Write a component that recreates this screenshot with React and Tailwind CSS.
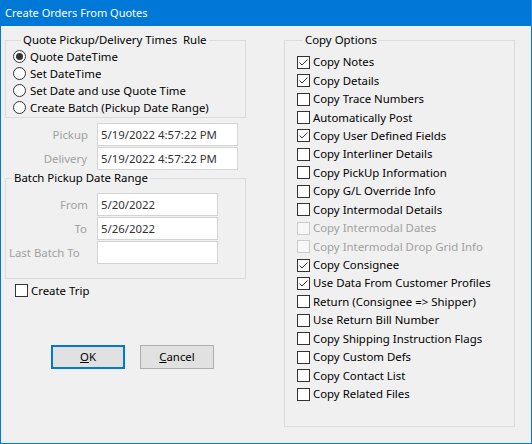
import React from "react";

const FONT = { fontFamily: '"Segoe UI", "Noto Sans", sans-serif' };

function Radio({ checked, label }) {
  return (
    <div className="flex items-center h-[17px]">
      <span className="w-[13px] h-[13px] rounded-full border border-[#333333] bg-white flex items-center justify-center shrink-0">
        {checked && <span className="w-[7px] h-[7px] rounded-full bg-[#333333]" />}
      </span>
      <span className="ml-[4px] text-[#000000] whitespace-nowrap">{label}</span>
    </div>
  );
}

function Check({ checked, disabled, label, h = "h-[18.45px]" }) {
  return (
    <div className={`flex items-center ${h}`}>
      <span
        className={`w-[13px] h-[13px] border shrink-0 flex items-center justify-center ${
          disabled ? "border-[#cccccc] bg-[#f7f7f7]" : "border-[#333333] bg-white"
        }`}
      >
        {checked && (
          <svg width="11" height="11" viewBox="0 0 11 11">
            <polyline points="1.5,5.5 4,8 9.5,2.5" fill="none" stroke="#333333" strokeWidth="1" />
          </svg>
        )}
      </span>
      <span className={`ml-[3px] whitespace-nowrap ${disabled ? "text-[#a0a0a0]" : "text-black"}`}>{label}</span>
    </div>
  );
}

function Field({ value, w }) {
  return (
    <div className={`${w} h-[23px] bg-white border border-[#d4d4d4] pl-[3px] flex items-center text-[#333333] whitespace-nowrap`}>
      {value}
    </div>
  );
}

export default function App() {
  const options = [
    ["Copy Notes", true],
    ["Copy Details", true],
    ["Copy Trace Numbers", false],
    ["Automatically Post", false],
    ["Copy User Defined Fields", true],
    ["Copy Interliner Details", false],
    ["Copy PickUp Information", false],
    ["Copy G/L Override Info", false],
    ["Copy Intermodal Details", false],
    ["Copy Intermodal Dates", false, true],
    ["Copy Intermodal Drop Grid Info", false, true],
    ["Copy Consignee", true],
    ["Use Data From Customer Profiles", true],
    ["Return (Consignee => Shipper)", false],
    ["Use Return Bill Number", false],
    ["Copy Shipping Instruction Flags", false],
    ["Copy Custom Defs", false],
    ["Copy Contact List", false],
    ["Copy Related Files", false],
  ];

  return (
    <div className="w-[532px] h-[444px] bg-[#f0f0f0] text-[11.4px] leading-[16px] overflow-hidden flex flex-col" style={FONT}>
      <div className="h-[26px] bg-[#0078d7] text-white text-[11px] pl-[5px] flex items-center shrink-0 border-r border-[#2b88d8]">
        Create Orders From Quotes
      </div>
      <div className="flex-1 flex border-l border-r border-b border-[#0078d7]">
        {/* Left column */}
        <div className="ml-[4px] w-[241px] flex flex-col">
          <fieldset className="mt-[6px] border border-[#dcdcdc] pl-[7px] pb-[1px]">
            <legend className="ml-[8px] px-[2px] leading-[16px]">Quote Pickup/Delivery Times&nbsp; Rule</legend>
            <Radio checked label="Quote DateTime" />
            <Radio label="Set DateTime" />
            <Radio label="Set Date and use Quote Time" />
            <Radio label="Create Batch (Pickup Date Range)" />
          </fieldset>

          <div className="mt-[5px] flex flex-col gap-[1px]">
            <div className="flex items-center">
              <div className="w-[83px] text-right text-[#a0a0a0]">Pickup</div>
              <div className="ml-[9px]">
                <Field w="w-[141px]" value="5/19/2022 4:57:22 PM" />
              </div>
            </div>
            <div className="flex items-center">
              <div className="w-[82px] text-right text-[#a0a0a0]">Delivery</div>
              <div className="ml-[10px]">
                <Field w="w-[141px]" value="5/19/2022 4:57:22 PM" />
              </div>
            </div>
          </div>

          <fieldset className="border border-[#dcdcdc] h-[109px]">
            <legend className="ml-[6px] px-[2px] leading-[16px]">Batch Pickup Date Range</legend>
            <div className="mt-[7px] flex flex-col gap-[1px]">
              <div className="flex items-center">
                <div className="w-[82px] text-right text-[#a0a0a0]">From</div>
                <div className="ml-[9px]">
                  <Field w="w-[121px]" value="5/20/2022" />
                </div>
              </div>
              <div className="flex items-center">
                <div className="w-[81px] text-right text-[#a0a0a0]">To</div>
                <div className="ml-[10px]">
                  <Field w="w-[121px]" value="5/26/2022" />
                </div>
              </div>
              <div className="flex items-center">
                <div className="w-[91px] pl-[3px] text-[#a0a0a0]">Last Batch To</div>
                <Field w="w-[121px]" value="" />
              </div>
            </div>
          </fieldset>

          <div className="ml-[10px] mt-[4px]">
            <Check label="Create Trip" h="h-[15px]" />
          </div>

          <div className="mt-[47px] ml-[46px] flex gap-[15px]">
            <button className="w-[74px] h-[24px] bg-[#e1e1e1] border-2 border-[#0078d7] flex items-center justify-center text-black">
              <span><span className="underline">O</span>K</span>
            </button>
            <button className="w-[74px] h-[24px] bg-[#e1e1e1] border border-[#adadad] flex items-center justify-center text-black">
              <span><span className="underline">C</span>ancel</span>
            </button>
          </div>
        </div>

        {/* Right column */}
        <div className="ml-[38px] w-[231px] flex flex-col">
          <fieldset className="mt-[6px] border border-[#dcdcdc] h-[395px] pl-[12px] pt-[5px]">
            <legend className="ml-[6px] px-[2px] leading-[16px]">Copy Options</legend>
            {options.map(([label, checked, disabled]) => (
              <Check key={label} label={label} checked={checked} disabled={disabled} />
            ))}
          </fieldset>
        </div>
      </div>
    </div>
  );
}
